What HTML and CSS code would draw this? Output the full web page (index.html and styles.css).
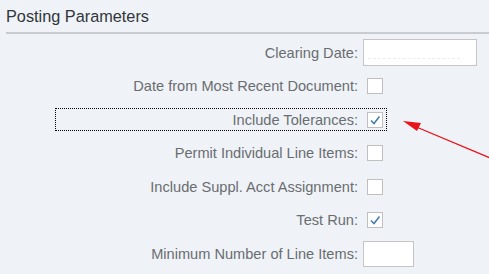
FILE: index.html
```html
<!DOCTYPE html>
<html lang="en">
<head>
    <meta charset="UTF-8">
    <meta name="viewport" content="width=device-width, initial-scale=1.0">
    <title>Posting Parameters</title>
    <link rel="stylesheet" href="styles.css">
</head>
<body>
    <div class="panel">
        <h2 class="title">Posting Parameters</h2>
        <div class="form">
            <div class="row">
                <div class="item">
                    <label class="lbl">Clearing Date:</label>
                    <div class="input wide"><span class="mask"></span></div>
                </div>
            </div>
            <div class="row">
                <div class="item">
                    <label class="lbl">Date from Most Recent Document:</label>
                    <span class="check"></span>
                </div>
            </div>
            <div class="row">
                <div class="item focus">
                    <label class="lbl">Include Tolerances:</label>
                    <span class="check on">
                        <svg width="14" height="14" viewBox="0 0 14 14"><polyline points="3,7.5 6,10.5 11.5,3.5" fill="none" stroke="#427cac" stroke-width="1.5"/></svg>
                    </span>
                </div>
            </div>
            <div class="row">
                <div class="item">
                    <label class="lbl">Permit Individual Line Items:</label>
                    <span class="check"></span>
                </div>
            </div>
            <div class="row">
                <div class="item">
                    <label class="lbl">Include Suppl. Acct Assignment:</label>
                    <span class="check"></span>
                </div>
            </div>
            <div class="row">
                <div class="item">
                    <label class="lbl">Test Run:</label>
                    <span class="check on">
                        <svg width="14" height="14" viewBox="0 0 14 14"><polyline points="3,7.5 6,10.5 11.5,3.5" fill="none" stroke="#427cac" stroke-width="1.5"/></svg>
                    </span>
                </div>
            </div>
            <div class="row">
                <div class="item">
                    <label class="lbl">Minimum Number of Line Items:</label>
                    <div class="input small"></div>
                </div>
            </div>
        </div>
    </div>

    <svg class="arrow" width="489" height="274" viewBox="0 0 489 274">
        <line x1="490" y1="158" x2="414" y2="126" stroke="#e8141a" stroke-width="1.3"/>
        <polygon points="403,121 421,123 417,131" fill="#e8141a"/>
    </svg>
</body>
</html>
```

FILE: styles.css
```css
* {
    margin: 0;
    padding: 0;
    box-sizing: border-box;
}
body {
    background-color: #eff3f7;
    font-family: "Liberation Sans", Arial, sans-serif;
    width: 489px;
    height: 274px;
    overflow: hidden;
}
.panel {
    padding-left: 6px;
}
.title {
    height: 34px;
    padding-top: 7px;
    font-size: 16.3px;
    font-weight: normal;
    color: #32363a;
    border-bottom: 2px solid #c8ccd0;
}
.form {
    padding-top: 2px;
}
.row {
    height: 33.5px;
    display: flex;
    align-items: center;
    padding-left: 50px;
}
.item {
    display: flex;
    align-items: center;
    height: 21px;
    padding-right: 3px;
}
.focus {
    outline: 1px dotted #000;
}
.lbl {
    width: 302px;
    text-align: right;
    font-size: 14.6px;
    color: #6a6d70;
}
.check {
    width: 16px;
    height: 16px;
    margin-left: 9px;
    background-color: #fff;
    border: 1px solid #bfbfbf;
    display: flex;
    align-items: center;
    justify-content: center;
}
.input {
    margin-left: 5px;
    background-color: #fff;
    border: 1px solid #c5c5c5;
    height: 27px;
}
.wide {
    width: 114px;
    padding: 0 16px 0 4px;
    display: flex;
    align-items: flex-end;
}
.mask {
    display: block;
    width: 100%;
    margin-bottom: 6px;
    border-bottom: 1px dashed #ececec;
}
.small {
    width: 51px;
    height: 26px;
}
.arrow {
    position: absolute;
    left: 0;
    top: 0;
    pointer-events: none;
}
```
